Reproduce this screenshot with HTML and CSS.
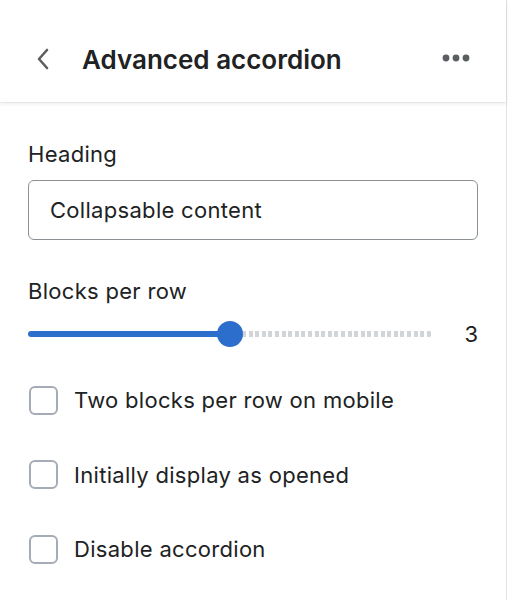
FILE: index.html
```html
<!DOCTYPE html>
<html>
<head>
<meta charset="utf-8">
<link rel="stylesheet" href="styles.css">
</head>
<body>
<div class="panel">
  <header class="header">
    <button class="back" aria-label="Back">
      <svg width="14" height="22" viewBox="0 0 14 22"><path d="M11 2 L3 11 L11 20" fill="none" stroke="#5c5f62" stroke-width="2.6" stroke-linecap="round" stroke-linejoin="round"/></svg>
    </button>
    <h1 class="title">Advanced accordion</h1>
    <button class="more" aria-label="More">
      <svg width="28" height="8" viewBox="0 0 28 8"><circle cx="4" cy="4" r="3.4" fill="#5c5f62"/><circle cx="14" cy="4" r="3.4" fill="#5c5f62"/><circle cx="24" cy="4" r="3.4" fill="#5c5f62"/></svg>
    </button>
  </header>
  <main class="content">
    <label class="field-label">Heading</label>
    <div class="input">Collapsable content</div>

    <label class="field-label range-label">Blocks per row</label>
    <div class="range">
      <div class="track">
        <div class="fill"></div>
        <div class="thumb"></div>
        <div class="rest"></div>
      </div>
      <span class="value">3</span>
    </div>

    <div class="checks">
      <div class="check"><span class="box"></span><span class="check-label">Two blocks per row on mobile</span></div>
      <div class="check"><span class="box"></span><span class="check-label">Initially display as opened</span></div>
      <div class="check"><span class="box"></span><span class="check-label">Disable accordion</span></div>
    </div>
  </main>
</div>
</body>
</html>
```
FILE: styles.css
```css
* { box-sizing: border-box; }
html, body { margin: 0; padding: 0; background: #fff; }
body {
  font-family: "Inter", "Liberation Sans", sans-serif;
  color: #202223;
}
.panel {
  width: 507px;
  height: 600px;
  border-right: 1px solid #e1e3e5;
  background: #fff;
}
.header {
  height: 102px;
  display: flex;
  align-items: center;
  padding: 0 36px 0 36px;
  box-shadow: 0 2px 4px rgba(0,0,0,0.08), 0 1px 0 rgba(0,0,0,0.04);
  position: relative;
}
.back, .more {
  border: 0;
  background: none;
  padding: 0;
  display: flex;
  align-items: center;
}
.back { width: 46px; margin-top: 16px; }
.title {
  flex: 1;
  margin: 16px 0 0;
  font-size: 26px;
  font-weight: 600;
  letter-spacing: 0;
  color: #202223;
}
.more { margin-top: 14px; }
.content {
  padding: 38px 28px 0;
  display: flex;
  flex-direction: column;
}
.field-label {
  font-size: 22px;
  letter-spacing: 0.3px;
  line-height: 28px;
  color: #202223;
}
.input {
  margin-top: 12px;
  height: 60px;
  border: 1px solid #8c9196;
  border-radius: 6px;
  padding: 0 21px;
  display: flex;
  align-items: center;
  font-size: 22px;
  letter-spacing: 0.3px;
}
.range-label { margin-top: 37px; }
.range {
  display: flex;
  align-items: center;
  height: 42px;
  margin-top: 8px;
}
.track {
  flex: 0 0 404px;
  display: flex;
  align-items: center;
}
.fill {
  width: 190px;
  height: 6px;
  background: #2c6ecb;
  border-radius: 3px 0 0 3px;
}
.thumb {
  width: 26px;
  height: 26px;
  border-radius: 50%;
  background: #2c6ecb;
  margin-left: -1px;
  margin-right: -1px;
  position: relative;
}
.rest {
  flex: 1;
  height: 6px;
  border-radius: 0 3px 3px 0;
  background: repeating-linear-gradient(90deg, #d2d5d8 0 4px, transparent 4px 6.6px);
}
.value {
  margin-left: auto;
  font-size: 22px;
}
.checks {
  margin-top: 31px;
  display: flex;
  flex-direction: column;
  gap: 46.5px;
}
.check {
  display: flex;
  align-items: center;
  height: 28px;
}
.box {
  width: 29px;
  height: 29px;
  border: 2.5px solid #a5acb6;
  border-radius: 6px;
  margin-left: 1px;
  margin-right: 16px;
}
.check-label {
  font-size: 22px;
  letter-spacing: 0.3px;
}
```
